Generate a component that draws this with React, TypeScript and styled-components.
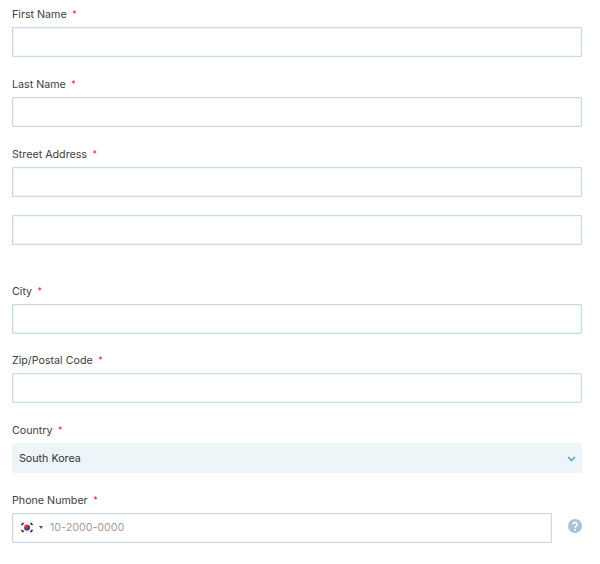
import styled, { createGlobalStyle } from 'styled-components';

const GlobalStyle = createGlobalStyle`
  html, body {
    margin: 0;
    padding: 0;
    background: #fff;
    font-family: 'Inter', 'Liberation Sans', sans-serif;
  }
`;

const Form = styled.form`
  display: flex;
  flex-direction: column;
  width: 570px;
  padding: 7.2px 18px 0 12px;
`;

const Field = styled.div<{ $gap?: number }>`
  display: flex;
  flex-direction: column;
  margin-bottom: ${({ $gap }) => $gap ?? 19}px;
`;

const Label = styled.label`
  display: block;
  height: 20px;
  line-height: 14px;
  font-size: 10.7px;
  color: #404040;
`;

const Required = styled.span`
  color: #e8202a;
  margin-left: 5.5px;
  font-size: 9px;
  vertical-align: 1px;
`;

const Input = styled.input<{ $gapTop?: number }>`
  box-sizing: border-box;
  display: block;
  width: 100%;
  height: 30px;
  margin-top: ${({ $gapTop }) => $gapTop ?? 0}px;
  border: 1px solid #c6dae5;
  border-radius: 1px;
  box-shadow: inset 0 0 0 1px rgba(205, 222, 232, 0.3);
  background: #fff;
  outline: none;
`;

const SelectBox = styled.div`
  display: flex;
  align-items: center;
  justify-content: space-between;
  height: 30px;
  padding: 0 5px 0 7px;
  background: #eef5f9;
  font-size: 10.7px;
  color: #333;
`;

const PhoneRow = styled.div`
  display: flex;
  align-items: center;
  gap: 16px;
`;

const PhoneBox = styled.div`
  box-sizing: border-box;
  display: flex;
  align-items: center;
  width: 540px;
  height: 30px;
  padding-left: 7px;
  border: 1px solid #c6dae5;
  border-radius: 1px;
  box-shadow: inset 0 0 0 1px rgba(205, 222, 232, 0.3);
`;

const FlagCaret = styled.span`
  width: 0;
  height: 0;
  margin: 0 7px 0 5px;
  border-left: 2.5px solid transparent;
  border-right: 2.5px solid transparent;
  border-top: 3px solid #555;
`;

const Placeholder = styled.span`
  font-size: 10.7px;
  color: #a0a0a0;
`;

const HelpIcon = styled.svg`
  width: 14px;
  height: 14px;
  margin-top: -3px;
`;

function Flag() {
  return (
    <svg width="14" height="13" viewBox="0 0 14 13">
      <rect width="14" height="13" fill="#f6f6f6" />
      <circle cx="7" cy="6.5" r="3" fill="#d8344a" />
      <path d="M4 6.5a3 3 0 0 0 6 0 1.5 1.5 0 0 0-3 0 1.5 1.5 0 0 1-3 0z" fill="#2a4a94" />
      <g stroke="#222" strokeWidth="1.6">
        <path d="M1.5 4 3.5 2" />
        <path d="M10.5 2 12.5 4" />
        <path d="M1.5 9 3.5 11" />
        <path d="M10.5 11 12.5 9" />
      </g>
    </svg>
  );
}

const fields = [
  { label: 'First Name' },
  { label: 'Last Name' },
  { label: 'Street Address', extra: true },
  { label: 'City' },
  { label: 'Zip/Postal Code' },
];

export default function App() {
  return (
    <>
      <GlobalStyle />
      <Form>
        {fields.map((f) => (
          <Field key={f.label} $gap={f.extra ? 38.5 : 19.7}>
            <Label>
              {f.label}
              <Required>*</Required>
            </Label>
            <Input />
            {f.extra && <Input $gapTop={18.6} />}
          </Field>
        ))}
        <Field $gap={19.7}>
          <Label>
            Country<Required>*</Required>
          </Label>
          <SelectBox>
            South Korea
            <svg width="11" height="11" viewBox="0 0 11 11" fill="none">
              <path d="M2 4l3.5 3.5L9 4" stroke="#3f9cc4" strokeWidth="1.3" />
            </svg>
          </SelectBox>
        </Field>
        <Field>
          <Label>
            Phone Number<Required>*</Required>
          </Label>
          <PhoneRow>
            <PhoneBox>
              <Flag />
              <FlagCaret />
              <Placeholder>10-2000-0000</Placeholder>
            </PhoneBox>
            <HelpIcon viewBox="0 0 14 14">
              <circle cx="7" cy="7" r="7" fill="#a9c2d3" />
              <path
                d="M5 5.4a2 2 0 1 1 3.1 1.7C7.4 7.6 7 7.9 7 8.7"
                fill="none"
                stroke="#fff"
                strokeWidth="1.6"
              />
              <circle cx="7" cy="10.8" r="1" fill="#fff" />
            </HelpIcon>
          </PhoneRow>
        </Field>
      </Form>
    </>
  );
}
